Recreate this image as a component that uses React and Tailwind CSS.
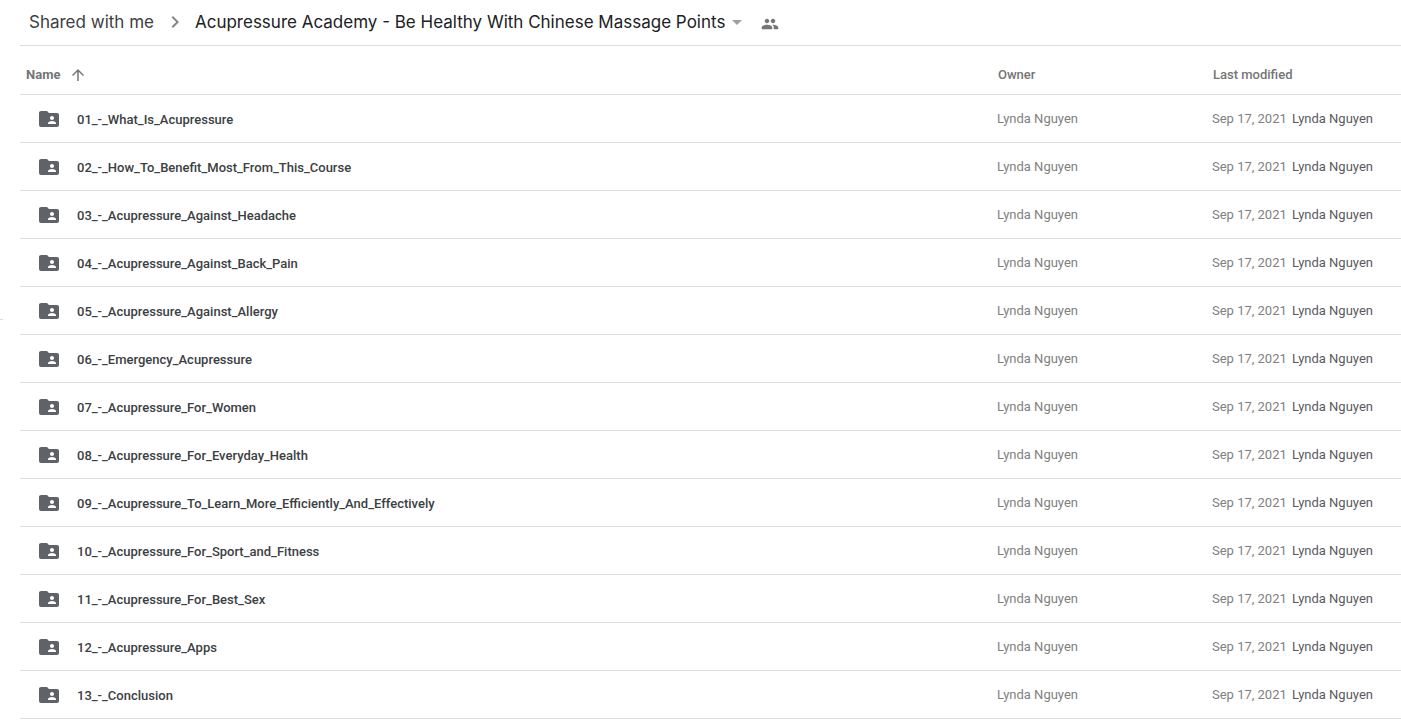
import { MdArrowDropDown, MdArrowUpward, MdChevronRight, MdFolderShared, MdPeople } from "react-icons/md";

const folders = [
  "01_-_What_Is_Acupressure",
  "02_-_How_To_Benefit_Most_From_This_Course",
  "03_-_Acupressure_Against_Headache",
  "04_-_Acupressure_Against_Back_Pain",
  "05_-_Acupressure_Against_Allergy",
  "06_-_Emergency_Acupressure",
  "07_-_Acupressure_For_Women",
  "08_-_Acupressure_For_Everyday_Health",
  "09_-_Acupressure_To_Learn_More_Efficiently_And_Effectively",
  "10_-_Acupressure_For_Sport_and_Fitness",
  "11_-_Acupressure_For_Best_Sex",
  "12_-_Acupressure_Apps",
  "13_-_Conclusion",
];

function Breadcrumbs() {
  return (
    <nav
      aria-label="Breadcrumb"
      className="flex h-[46px] items-center border-b border-[#dadce0] pb-px pl-[9px] font-['Inter',sans-serif] text-[17px] leading-6"
    >
      <a href="#shared" className="whitespace-nowrap text-[#3c4043]">
        Shared with me
      </a>
      <MdChevronRight size={24} className="ml-[9px] mr-2 shrink-0 text-[#80868b]" aria-hidden="true" />
      <button type="button" className="flex items-center whitespace-nowrap text-[#202124]">
        Acupressure Academy - Be Healthy With Chinese Massage Points
        <MdArrowDropDown size={24} className="text-[#9aa0a6]" aria-hidden="true" />
      </button>
      <button type="button" aria-label="Manage people" className="ml-3 pt-1 text-[#757575]">
        <MdPeople size={18} />
      </button>
    </nav>
  );
}

function FolderRow({ name }) {
  return (
    <tr className="h-12 border-b border-[#dadce0]">
      <td className="p-0 pt-0.5">
        <a href="#folder" className="flex items-center gap-4 pl-[17px] font-medium text-[#3c4043]">
          <MdFolderShared size={24} className="shrink-0 text-[#5f6368]" aria-hidden="true" />
          <span className="pt-0.5">{name}</span>
        </a>
      </td>
      <td className="p-0 pt-0.5 text-[#808080]">Lynda Nguyen</td>
      <td className="whitespace-nowrap p-0 pt-0.5 text-[#808080]">
        Sep 17, 2021 <span className="ml-0.5 text-[#5a5a5f]">Lynda Nguyen</span>
      </td>
    </tr>
  );
}

export default function App() {
  return (
    <div className="flex min-h-screen overflow-hidden bg-white font-['Roboto',sans-serif] text-[13px] leading-5">
      <aside className="w-5 shrink-0 pt-[319px]">
        <hr className="w-[3px] border-[#dadce0]" />
      </aside>
      <main className="min-w-0 flex-1">
        <Breadcrumbs />
        <table className="w-full table-fixed border-collapse text-left">
          <thead>
            <tr className="h-12 border-b border-[#dadce0] text-[#757575]">
              <th className="p-0 pt-2.5 font-medium">
                <button type="button" className="flex items-center gap-[9px] pl-1.5 font-bold">
                  Name
                  <MdArrowUpward size={18} aria-hidden="true" />
                </button>
              </th>
              <th className="w-[215px] p-0 pl-px pt-2.5 font-medium">Owner</th>
              <th className="w-[189px] p-0 pl-px pt-2.5 font-medium">Last modified</th>
            </tr>
          </thead>
          <tbody>
            {folders.map((name) => (
              <FolderRow key={name} name={name} />
            ))}
          </tbody>
        </table>
      </main>
    </div>
  );
}
